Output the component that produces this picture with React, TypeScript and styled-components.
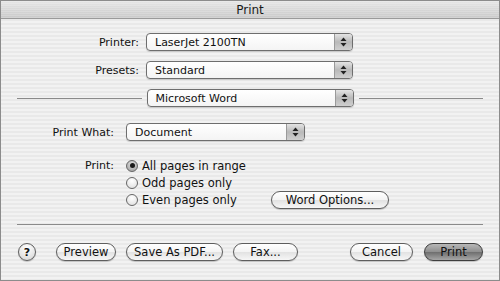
import React from 'react'
import styled, { createGlobalStyle, css } from 'styled-components'

const GlobalStyle = createGlobalStyle`
  html, body {
    margin: 0;
    padding: 0;
    background: #ffffff;
  }
  body {
    font-family: "DejaVu Sans", "Liberation Sans", sans-serif;
    font-size: 11px;
    color: #111;
  }
`

const Window = styled.div`
  width: 500px;
  height: 281px;
  box-sizing: border-box;
  border: 1px solid #8c8c8c;
  display: flex;
  flex-direction: column;
  background: repeating-linear-gradient(
    to bottom,
    #f2f2f2 0px,
    #f2f2f2 2px,
    #e9e9e9 2px,
    #e9e9e9 4px
  );
`

const TitleBar = styled.div`
  height: 17px;
  border-bottom: 1px solid #9a9a9a;
  display: flex;
  align-items: center;
  justify-content: center;
  font-size: 12px;
  color: #1a1a1a;
  background:
    repeating-linear-gradient(to bottom, rgba(255,255,255,0.18) 0 1px, rgba(0,0,0,0) 1px 2px),
    linear-gradient(to bottom, #e6e6e6, #c9c9c9);
`

const Content = styled.div`
  flex: 1;
  padding: 14px 16px 0 16px;
  display: flex;
  flex-direction: column;
`

const FieldRow = styled.div<{ $labelWidth: number; $gap: number; $top?: number; $alignTop?: boolean }>`
  display: flex;
  align-items: ${({ $alignTop }) => ($alignTop ? 'flex-start' : 'center')};
  gap: ${({ $gap }) => $gap}px;
  margin-top: ${({ $top }) => $top ?? 0}px;
  & > label {
    width: ${({ $labelWidth }) => $labelWidth}px;
    text-align: right;
    flex-shrink: 0;
    line-height: 17px;
  }
`

const PopupBox = styled.div<{ $width: number }>`
  width: ${({ $width }) => $width}px;
  height: 18px;
  box-sizing: border-box;
  border: 1px solid #6e6e6e;
  border-radius: 4px;
  background: linear-gradient(to bottom, #ffffff, #f4f4f4);
  display: flex;
  align-items: stretch;
  overflow: hidden;
  box-shadow: 0 1px 1px rgba(0,0,0,0.15);
  flex-shrink: 0;
`

const PopupText = styled.span`
  flex: 1;
  padding-left: 8px;
  display: flex;
  align-items: center;
`

const PopupArrows = styled.span`
  width: 17px;
  border-left: 1px solid #9a9a9a;
  background: linear-gradient(to bottom, #e4e4e4, #b9b9b9 50%, #cfcfcf);
  display: flex;
  align-items: center;
  justify-content: center;
`

const Popup = ({ value, width }: { value: string; width: number }) => (
  <PopupBox $width={width}>
    <PopupText>{value}</PopupText>
    <PopupArrows>
      <svg width="7" height="10" viewBox="0 0 7 10">
        <path d="M3.5 0.5 L6.5 4 L0.5 4 Z" fill="#222" />
        <path d="M3.5 9.5 L6.5 6 L0.5 6 Z" fill="#222" />
      </svg>
    </PopupArrows>
  </PopupBox>
)

const SectionRow = styled.div`
  display: flex;
  align-items: center;
  gap: 5px;
  margin-top: 10px;
  &::before,
  &::after {
    content: '';
    flex: 1;
    height: 1px;
    background: #8a8a8a;
  }
`

const Separator = styled.div`
  height: 1px;
  margin-top: 16px;
  background: #8a8a8a;
`

const RadioGroup = styled.div`
  display: flex;
  flex-direction: column;
`

const RadioLine = styled.div`
  height: 17px;
  display: flex;
  align-items: center;
`

const RadioItem = styled.span<{ $width?: number }>`
  display: flex;
  align-items: center;
  gap: 4px;
  width: ${({ $width }) => ($width ? `${$width}px` : 'auto')};
  font-size: 11.5px;
`

const RadioDot = styled.span<{ $checked?: boolean }>`
  width: 12px;
  height: 12px;
  box-sizing: border-box;
  border-radius: 50%;
  border: 1px solid #666;
  background: radial-gradient(circle at 50% 30%, #ffffff, #dcdcdc);
  display: flex;
  align-items: center;
  justify-content: center;
  ${({ $checked }) =>
    $checked &&
    css`
      background: radial-gradient(circle at 50% 30%, #e0e0e0, #9a9a9a);
      &::after {
        content: '';
        width: 5px;
        height: 5px;
        border-radius: 50%;
        background: #1a1a1a;
      }
    `}
`

const PillButton = styled.button<{ $width: number; $default?: boolean }>`
  width: ${({ $width }) => $width}px;
  height: 18px;
  box-sizing: border-box;
  border: 1px solid #5e5e5e;
  border-radius: 9px;
  padding: 0;
  font-family: inherit;
  font-size: 11.5px;
  color: #111;
  background: linear-gradient(to bottom, #ffffff 0%, #f3f3f3 50%, #e2e2e2 51%, #f6f6f6 100%);
  box-shadow: 0 1px 1px rgba(0,0,0,0.2);
  flex-shrink: 0;
  ${({ $default }) =>
    $default &&
    css`
      border-color: #3e3e3e;
      background: linear-gradient(to bottom, #b8b8b8 0%, #8e8e8e 50%, #6e6e6e 51%, #a6a6a6 100%);
    `}
`

const HelpButton = styled.button`
  width: 18px;
  height: 18px;
  box-sizing: border-box;
  border-radius: 50%;
  border: 1px solid #5e5e5e;
  padding: 0;
  font-family: inherit;
  font-weight: bold;
  font-size: 11px;
  color: #111;
  background: radial-gradient(circle at 50% 25%, #ffffff, #d4d4d4);
  box-shadow: 0 1px 1px rgba(0,0,0,0.2);
  flex-shrink: 0;
`

const BottomBar = styled.div`
  display: flex;
  align-items: center;
  margin-top: 18px;
  padding-left: 1px;
`

const Gap = styled.div<{ $w: number }>`
  width: ${({ $w }) => $w}px;
  flex-shrink: 0;
`

const Grow = styled.div`
  flex: 1;
`

const App = () => {
  return (
    <>
      <GlobalStyle />
      <Window>
        <TitleBar>Print</TitleBar>
        <Content>
          <FieldRow $labelWidth={122} $gap={7}>
            <label>Printer:</label>
            <Popup value="LaserJet 2100TN" width={207} />
          </FieldRow>
          <FieldRow $labelWidth={122} $gap={7} $top={10}>
            <label>Presets:</label>
            <Popup value="Standard" width={207} />
          </FieldRow>
          <SectionRow>
            <Popup value="Microsoft Word" width={207} />
          </SectionRow>
          <FieldRow $labelWidth={97} $gap={12} $top={16}>
            <label>Print What:</label>
            <Popup value="Document" width={179} />
          </FieldRow>
          <FieldRow $labelWidth={97} $gap={12} $top={16} $alignTop>
            <label>Print:</label>
            <RadioGroup>
              <RadioLine>
                <RadioItem>
                  <RadioDot $checked />
                  All pages in range
                </RadioItem>
              </RadioLine>
              <RadioLine>
                <RadioItem>
                  <RadioDot />
                  Odd pages only
                </RadioItem>
              </RadioLine>
              <RadioLine>
                <RadioItem $width={145}>
                  <RadioDot />
                  Even pages only
                </RadioItem>
                <PillButton $width={118}>Word Options...</PillButton>
              </RadioLine>
            </RadioGroup>
          </FieldRow>
          <Separator />
          <BottomBar>
            <HelpButton>?</HelpButton>
            <Gap $w={20} />
            <PillButton $width={60}>Preview</PillButton>
            <Gap $w={10} />
            <PillButton $width={97}>Save As PDF...</PillButton>
            <Gap $w={10} />
            <PillButton $width={65}>Fax...</PillButton>
            <Grow />
            <PillButton $width={63}>Cancel</PillButton>
            <Gap $w={11} />
            <PillButton $width={59} $default>Print</PillButton>
          </BottomBar>
        </Content>
      </Window>
    </>
  )
}

export default App
